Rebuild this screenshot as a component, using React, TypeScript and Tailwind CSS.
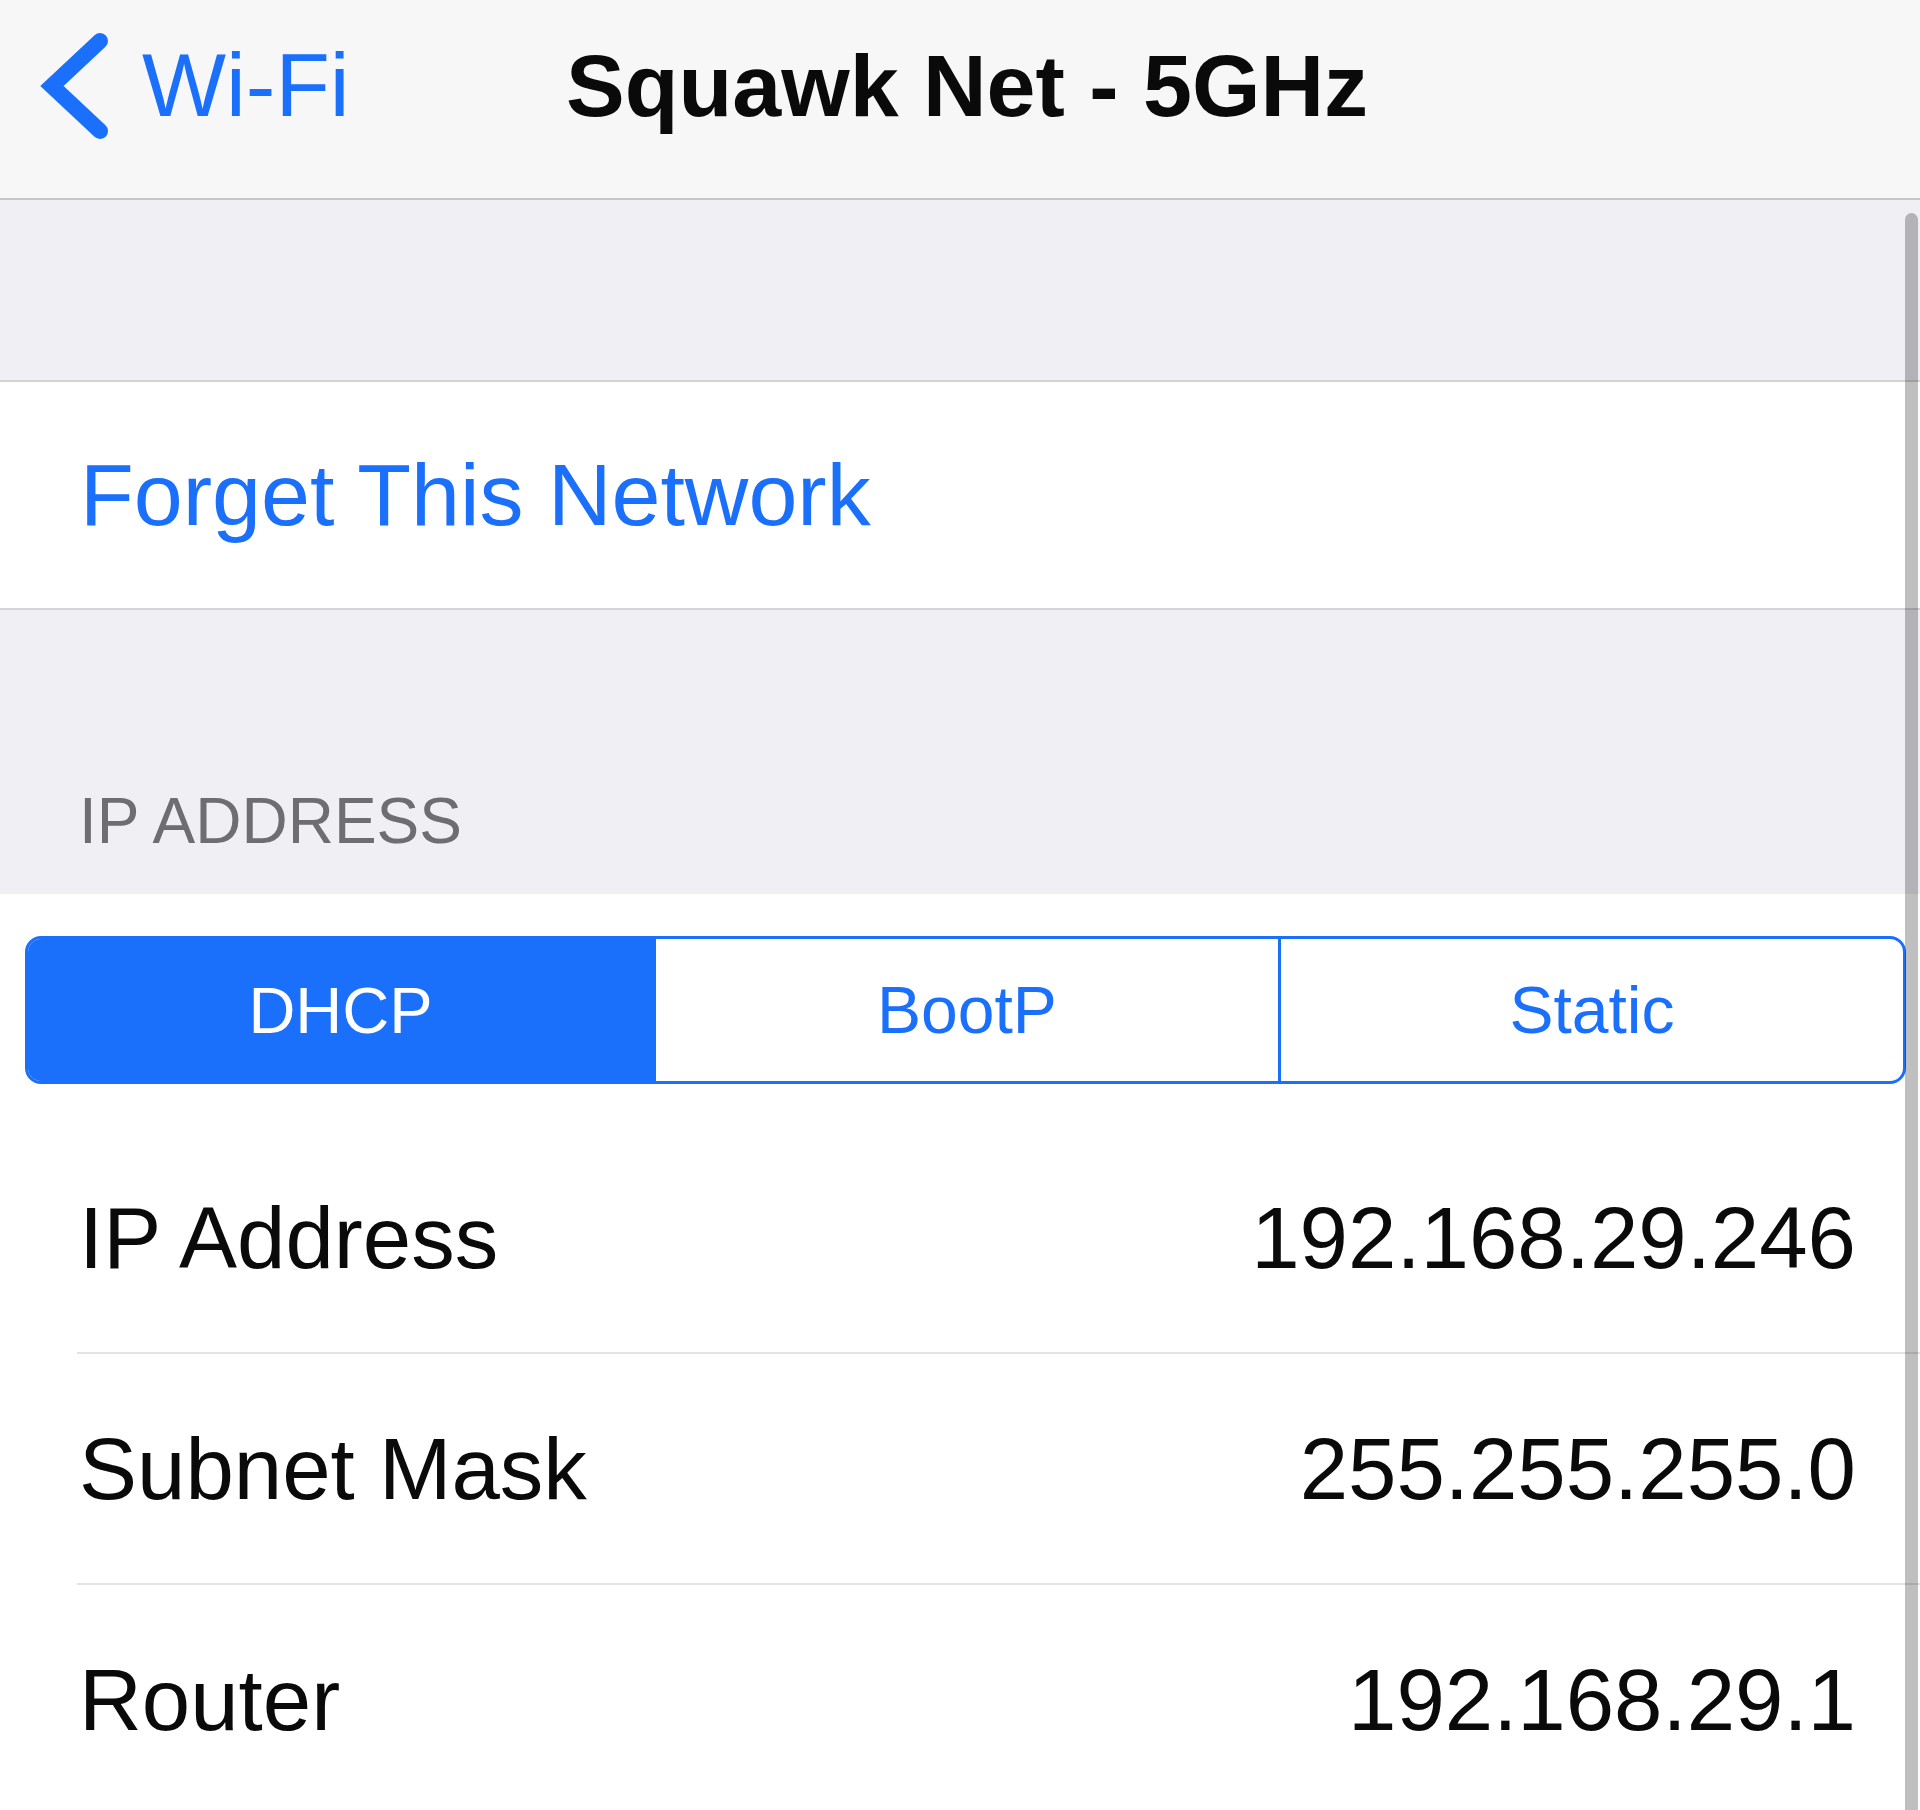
import React from "react";

const rows = [
  { label: "IP Address", value: "192.168.29.246" },
  { label: "Subnet Mask", value: "255.255.255.0" },
  { label: "Router", value: "192.168.29.1" },
];

const modes = ["DHCP", "BootP", "Static"];

export default function App() {
  return (
    <div className="relative w-[1920px] h-[1810px] overflow-hidden bg-white font-['Liberation_Sans',Arial,sans-serif]">
      {/* nav bar */}
      <div className="h-[200px] bg-[#f7f7f8] border-b-2 border-[#c6c6ca]">
        <div className="grid grid-cols-[1fr_auto_1fr] items-center h-full pb-[27px]">
          <div className="flex items-center">
            <svg className="ml-[40px] w-[72px] h-[126px]" viewBox="0 0 72 126" fill="none">
              <polyline points="60,18 12,63 60,108" stroke="#1a6ffb" strokeWidth="16" strokeLinecap="round" strokeLinejoin="miter" />
            </svg>
            <span className="ml-[30px] text-[89px] leading-none text-[#1a6ffb]">Wi-Fi</span>
          </div>
          <h1 className="text-[88px] leading-none font-bold text-[#0a0a0a] pl-[14px]">Squawk Net - 5GHz</h1>
          <div />
        </div>
      </div>

      {/* spacer */}
      <div className="h-[182px] bg-[#efeff4] border-b-2 border-[#d3d3d8]" />

      {/* forget row */}
      <div className="h-[226px] flex items-center pl-[80px] bg-white">
        <span className="text-[88px] leading-none text-[#1a6ffb]">Forget This Network</span>
      </div>

      {/* section header */}
      <div className="h-[286px] bg-[#efeff4] border-t-2 border-[#d3d3d8] flex items-end pl-[79px] pb-[41px]">
        <span className="text-[64px] leading-none text-[#6d6d72]">IP ADDRESS</span>
      </div>

      {/* segmented control */}
      <div className="pt-[42px] pb-[39px] pl-[25px] pr-[14px]">
        <div className="grid grid-cols-3 h-[148px] rounded-[16px] border-[3px] border-[#1a6ffb] overflow-hidden">
          {modes.map((m, i) => (
            <div
              key={m}
              className={
                i === 0
                  ? "flex items-center justify-center bg-[#1a6ffb] text-white text-[65px] leading-none"
                  : "flex items-center justify-center border-l-[3px] border-[#1a6ffb] text-[#1a6ffb] text-[66px] leading-none"
              }
            >
              {m}
            </div>
          ))}
        </div>
      </div>

      {/* info rows */}
      {rows.map((r, i) => (
        <div key={r.label}>
          <div className="h-[229px] flex items-center justify-between pl-[79px] pr-[64px]">
            <span className="text-[87px] leading-none text-[#0a0a0a]">{r.label}</span>
            <span className="text-[87px] leading-none text-[#0a0a0a]">{r.value}</span>
          </div>
          {i < rows.length - 1 && <div className="ml-[77px] h-[2px] bg-[#e3e3e5]" />}
        </div>
      ))}

      {/* scroll indicator */}
      <div className="absolute right-[2px] top-[213px] bottom-0 w-[13px] rounded-t-full bg-black/25" />
    </div>
  );
}
